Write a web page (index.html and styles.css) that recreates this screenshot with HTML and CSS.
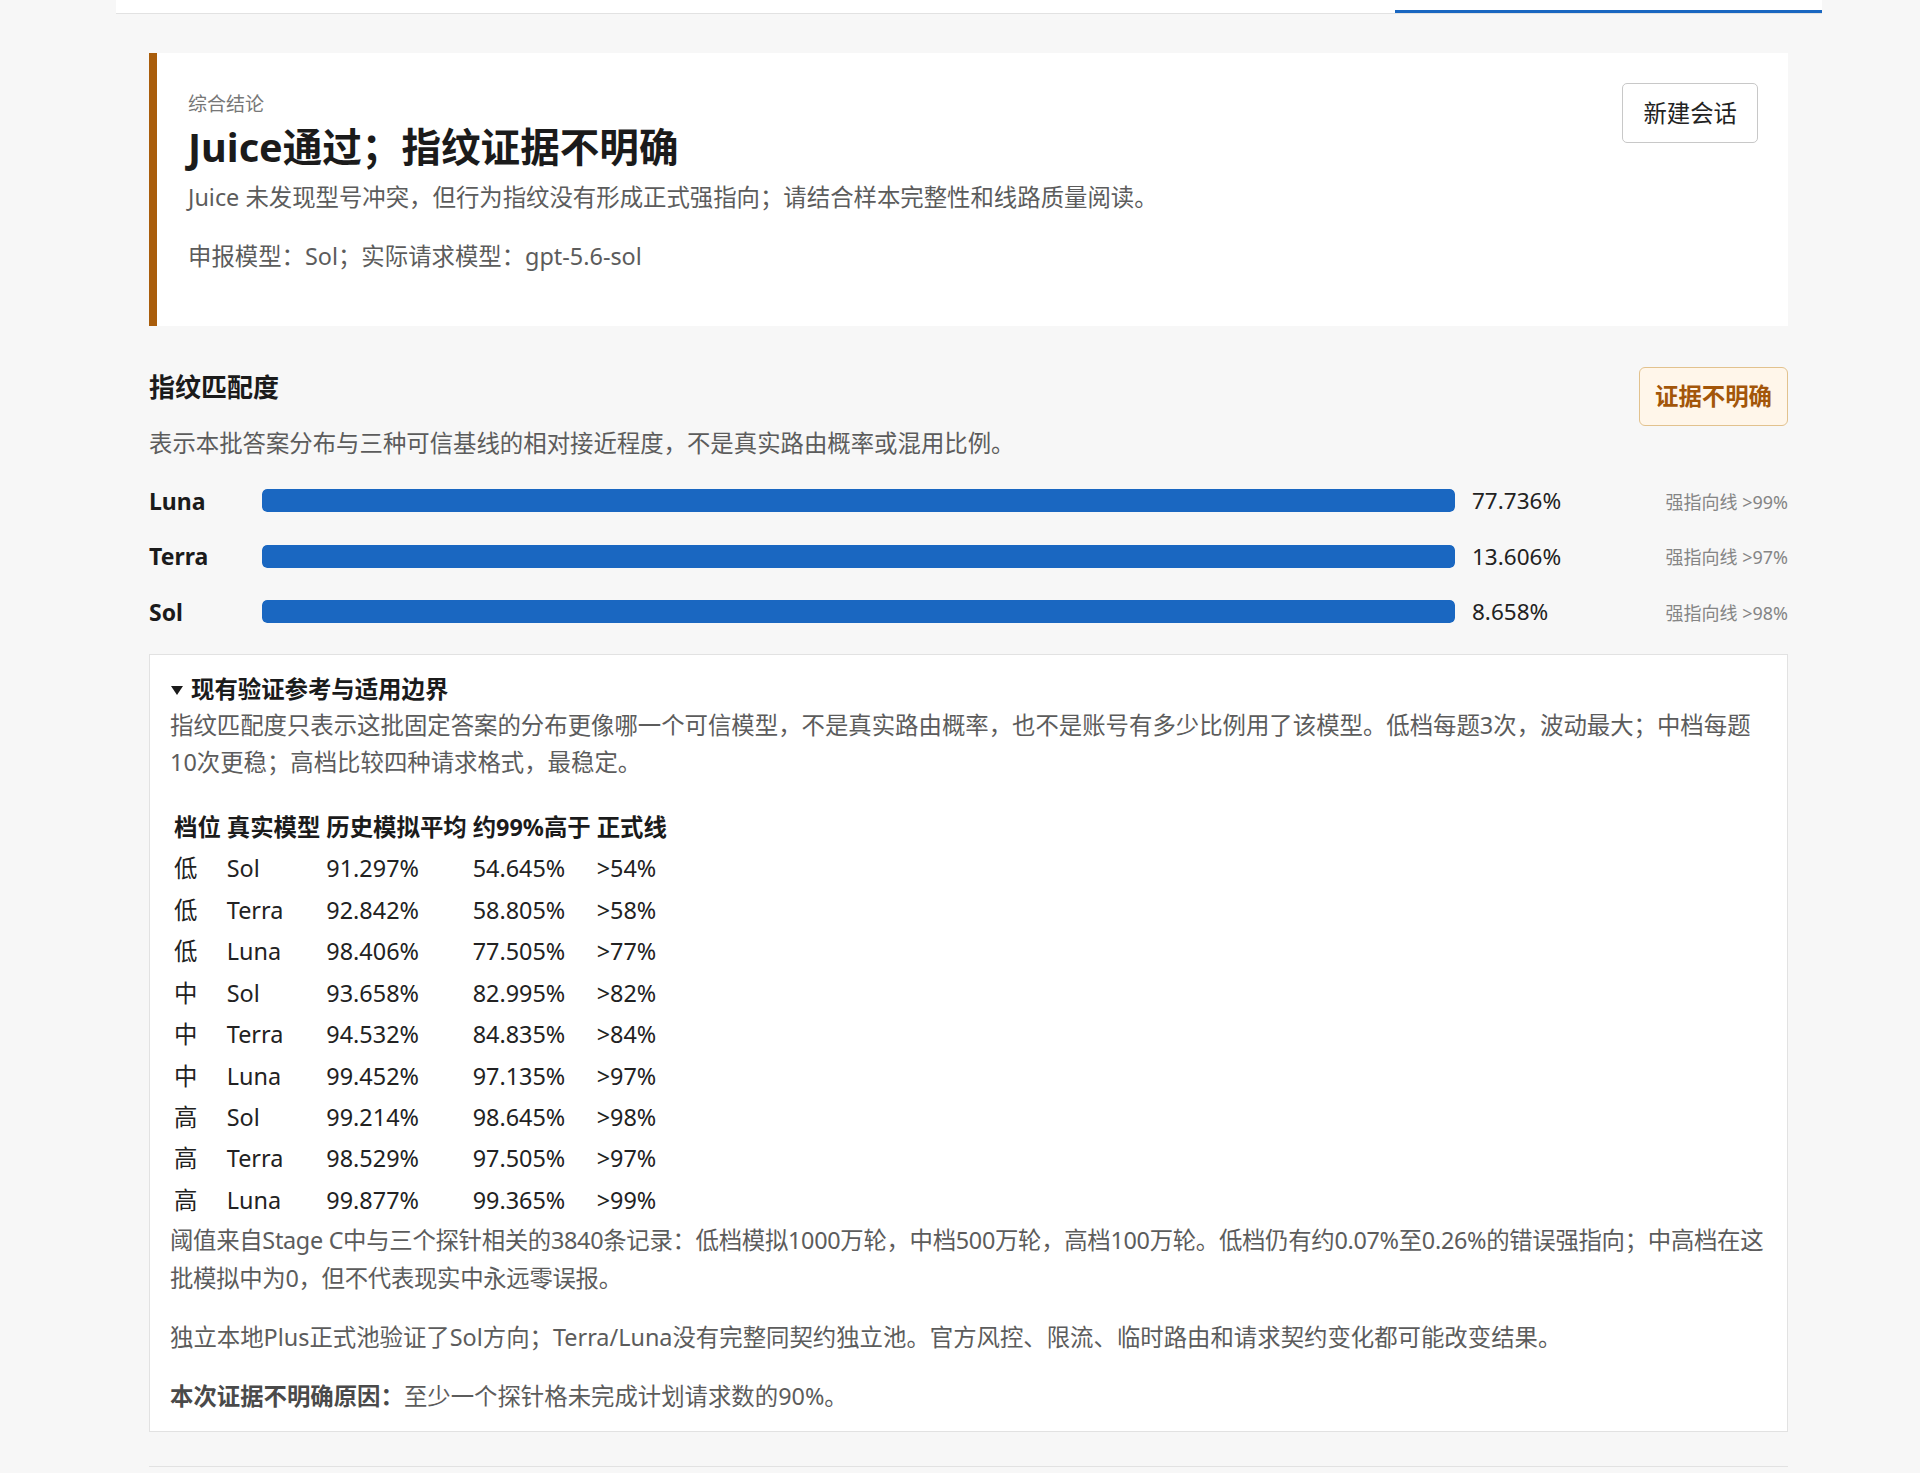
FILE: index.html
```html
<!DOCTYPE html>
<html lang="zh-CN">
<head>
<meta charset="UTF-8">
<meta name="viewport" content="width=device-width, initial-scale=1.0">
<title>Juice 检测结果</title>
<link rel="stylesheet" href="styles.css">
</head>
<body>

<header class="topbar">
    <div class="tab-line"></div>
</header>

<main class="page">

    <section class="verdict">
        <div class="verdict-text">
            <div class="eyebrow">综合结论</div>
            <h1>Juice通过；指纹证据不明确</h1>
            <p class="verdict-sub">Juice 未发现型号冲突，但行为指纹没有形成正式强指向；请结合样本完整性和线路质量阅读。</p>
            <p class="verdict-meta">申报模型：Sol；实际请求模型：gpt-5.6-sol</p>
        </div>
        <button class="btn" type="button">新建会话</button>
    </section>

    <section class="match">
        <div class="match-head">
            <div>
                <h2>指纹匹配度</h2>
                <p class="match-desc">表示本批答案分布与三种可信基线的相对接近程度，不是真实路由概率或混用比例。</p>
            </div>
            <span class="badge">证据不明确</span>
        </div>

        <div class="bars">
            <div class="bar-row">
                <span class="bar-name">Luna</span>
                <div class="bar-track"><div class="bar-fill"></div></div>
                <span class="bar-value">77.736%</span>
                <span class="bar-limit">强指向线 &gt;99%</span>
            </div>
            <div class="bar-row">
                <span class="bar-name">Terra</span>
                <div class="bar-track"><div class="bar-fill"></div></div>
                <span class="bar-value">13.606%</span>
                <span class="bar-limit">强指向线 &gt;97%</span>
            </div>
            <div class="bar-row">
                <span class="bar-name">Sol</span>
                <div class="bar-track"><div class="bar-fill"></div></div>
                <span class="bar-value">8.658%</span>
                <span class="bar-limit">强指向线 &gt;98%</span>
            </div>
        </div>

        <details class="notes" open>
            <summary>现有验证参考与适用边界</summary>
            <p>指纹匹配度只表示这批固定答案的分布更像哪一个可信模型，不是真实路由概率，也不是账号有多少比例用了该模型。低档每题3次，波动最大；中档每题10次更稳；高档比较四种请求格式，最稳定。</p>
            <table>
                <thead>
                    <tr><th>档位</th><th>真实模型</th><th>历史模拟平均</th><th>约99%高于</th><th>正式线</th></tr>
                </thead>
                <tbody>
                    <tr><td>低</td><td>Sol</td><td>91.297%</td><td>54.645%</td><td>&gt;54%</td></tr>
                    <tr><td>低</td><td>Terra</td><td>92.842%</td><td>58.805%</td><td>&gt;58%</td></tr>
                    <tr><td>低</td><td>Luna</td><td>98.406%</td><td>77.505%</td><td>&gt;77%</td></tr>
                    <tr><td>中</td><td>Sol</td><td>93.658%</td><td>82.995%</td><td>&gt;82%</td></tr>
                    <tr><td>中</td><td>Terra</td><td>94.532%</td><td>84.835%</td><td>&gt;84%</td></tr>
                    <tr><td>中</td><td>Luna</td><td>99.452%</td><td>97.135%</td><td>&gt;97%</td></tr>
                    <tr><td>高</td><td>Sol</td><td>99.214%</td><td>98.645%</td><td>&gt;98%</td></tr>
                    <tr><td>高</td><td>Terra</td><td>98.529%</td><td>97.505%</td><td>&gt;97%</td></tr>
                    <tr><td>高</td><td>Luna</td><td>99.877%</td><td>99.365%</td><td>&gt;99%</td></tr>
                </tbody>
            </table>
            <p class="after-table">阈值来自Stage C中与三个探针相关的3840条记录：低档模拟1000万轮，中档500万轮，高档100万轮。低档仍有约0.07%至0.26%的错误强指向；中高档在这批模拟中为0，但不代表现实中永远零误报。</p>
            <p>独立本地Plus正式池验证了Sol方向；Terra/Luna没有完整同契约独立池。官方风控、限流、临时路由和请求契约变化都可能改变结果。</p>
            <p><strong>本次证据不明确原因：</strong>至少一个探针格未完成计划请求数的90%。</p>
        </details>
    </section>

    <div class="next-section"></div>

</main>

</body>
</html>
```

FILE: styles.css
```css
body {
    margin: 0;
    background-color: #f7f7f7;
    font-family: "Noto Sans", "Noto Sans CJK SC", sans-serif;
    color: #222;
}

.topbar {
    height: 13px;
    margin: 0 98px 0 116px;
    background-color: #fff;
    border-bottom: 1px solid #e2e2e2;
    display: flex;
    justify-content: flex-end;
    align-items: flex-end;
}

.tab-line {
    width: 427px;
    height: 3px;
    background-color: #1a67c1;
}

.page {
    margin: 0 132px 0 149px;
    padding-top: 39px;
}

/* 综合结论 */
.verdict {
    display: flex;
    justify-content: space-between;
    align-items: flex-start;
    background-color: #fff;
    border-left: 8px solid #a95d0b;
    padding: 30px 30px 30px 31px;
}

.eyebrow {
    margin-top: 8px;
    font-size: 19px;
    line-height: 26px;
    color: #777;
}

.verdict h1 {
    margin: 7px 0 0;
    font-size: 39.6px;
    line-height: 47px;
    font-weight: 700;
    color: #1b1b1b;
}

.verdict-sub {
    margin: 9px 0 0;
    font-size: 23.4px;
    line-height: 35px;
    color: #5c5c5c;
}

.verdict-meta {
    margin: 24px 0 22px;
    font-size: 23.4px;
    line-height: 35px;
    color: #5c5c5c;
}

.btn {
    font-family: inherit;
    font-size: 23.4px;
    line-height: 35px;
    color: #222;
    background-color: #fff;
    border: 1px solid #c8c8c8;
    border-radius: 5px;
    padding: 11.5px 20px;
    cursor: pointer;
}

/* 指纹匹配度 */
.match {
    margin-top: 41px;
}

.match-head {
    display: flex;
    justify-content: space-between;
    align-items: flex-start;
}

.match h2 {
    margin: 0;
    font-size: 26px;
    line-height: 40px;
    font-weight: 700;
    color: #1b1b1b;
}

.match-desc {
    margin: 19px 0 0;
    font-size: 23.4px;
    line-height: 35px;
    color: #5c5c5c;
}

.badge {
    font-size: 23.4px;
    line-height: 35px;
    font-weight: 700;
    color: #a3560a;
    background-color: #fff6ea;
    border: 1px solid #e2c28e;
    border-radius: 6px;
    padding: 11px 15px;
}

.bars {
    margin-top: 22px;
    display: flex;
    flex-direction: column;
    gap: 20.5px;
}

.bar-row {
    display: grid;
    grid-template-columns: 96px 1fr 150px 149px;
    column-gap: 17px;
    align-items: center;
    height: 35px;
}

.bar-name {
    font-size: 23px;
    font-weight: 700;
    color: #1b1b1b;
}

.bar-track {
    height: 23px;
    border-radius: 5px;
    background-color: #e4e9f0;
    overflow: hidden;
}

.bar-fill {
    width: 100%;
    height: 100%;
    background-color: #1a67c1;
    border-radius: 5px;
}

.bar-value {
    font-size: 22.5px;
    color: #222;
}

.bar-limit {
    text-align: right;
    font-size: 18px;
    color: #858585;
}

/* 参考与边界 */
.notes {
    margin-top: 24.5px;
    background-color: #fff;
    border: 1px solid #e2e2e2;
    padding: 17.5px 20px 15.5px;
    font-size: 23.4px;
    line-height: 1.6;
}

.notes summary {
    list-style: none;
    font-weight: 700;
    line-height: 35px;
    color: #1b1b1b;
    cursor: pointer;
}

.notes summary::-webkit-details-marker {
    display: none;
}

.notes summary::before {
    content: "";
    display: inline-block;
    vertical-align: middle;
    margin: -3px 8px 0 1px;
    border-left: 6px solid transparent;
    border-right: 6px solid transparent;
    border-top: 9.5px solid #1b1b1b;
}

.notes p {
    margin: 0 0 21.5px;
    color: #5c5c5c;
}

.notes p:last-child {
    margin-bottom: 0;
}

.notes p strong {
    color: #4a4a4a;
}

.notes table {
    margin: 24px 0 0;
    font-size: 23.4px;
    color: #222;
}

.notes th,
.notes td {
    text-align: left;
    font-weight: 400;
    padding: 1px 2px;
}

.notes th {
    font-weight: 700;
    color: #1b1b1b;
}

.notes .after-table {
    margin-top: 0;
    letter-spacing: -0.3px;
}

.next-section {
    margin-top: 34px;
    border-top: 1px solid #e2e2e2;
    height: 20px;
}
```
